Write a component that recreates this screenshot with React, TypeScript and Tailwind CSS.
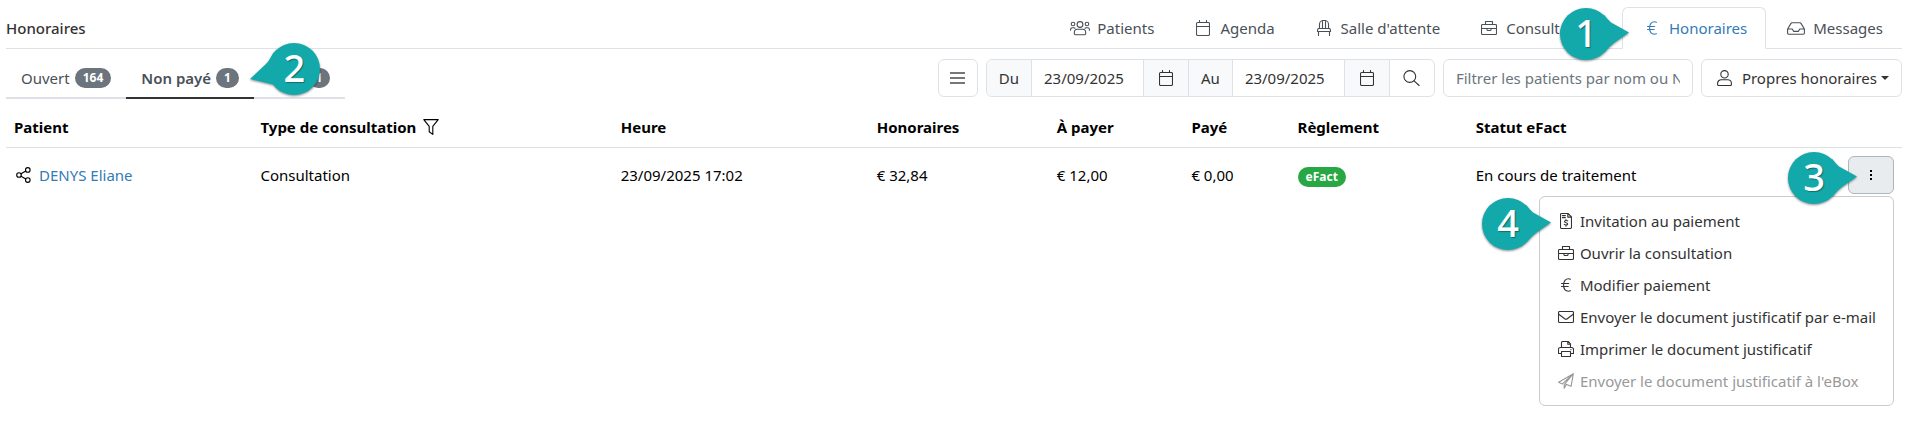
import { useState, type ReactNode } from "react"

function Icon({ w = 16, className = "", children }: { w?: number; className?: string; children: ReactNode }) {
  return (
    <svg
      width={w}
      height={16}
      viewBox={`0 0 ${w} 16`}
      fill="none"
      stroke="currentColor"
      strokeWidth={1.1}
      strokeLinecap="round"
      strokeLinejoin="round"
      className={`shrink-0 ${className}`}
      aria-hidden="true"
    >
      {children}
    </svg>
  )
}

const UsersIcon = () => (
  <Icon w={20}>
    <circle cx="10" cy="4.5" r="2.9" />
    <circle cx="3" cy="4" r="1.8" />
    <circle cx="17" cy="4" r="1.8" />
    <path d="M7.4 9.2h5.2a3.2 3.2 0 0 1 3.1 3.2v1.2a1.2 1.2 0 0 1-1.2 1.2h-9a1.2 1.2 0 0 1-1.2-1.2v-1.2a3.2 3.2 0 0 1 3.1-3.2z" />
    <path d="M.6 10.2v-.8a1.6 1.6 0 0 1 1.6-1.6h1.6l1.2.5M19.4 10.2v-.8a1.6 1.6 0 0 0-1.6-1.6h-1.6l-1.2.5" />
  </Icon>
)

const CalendarIcon = () => (
  <Icon w={14}>
    <rect x="0.5" y="2.5" width="13" height="13" rx="1.2" />
    <path d="M.5 6.5h13M3.5.5v2M10.5.5v2" />
  </Icon>
)

const ChairIcon = () => (
  <Icon w={14}>
    <path d="M2.5 8.5V4.2A3.7 3.7 0 0 1 6.2.5h1.6a3.7 3.7 0 0 1 3.7 3.7v4.3M5.5 8.500V.8M8.500 8.500V.8" />
    <path d="M1.300 8.500h11.400l.8 1.500v1.500H.5V10zM1.500 11.500v4M12.500 11.500v4" />
  </Icon>
)

const BriefcaseIcon = () => (
  <Icon w={16}>
    <rect x="0.5" y="4.5" width="15" height="10" rx="1" />
    <path d="M4.500 4.400V1.500h7v2.900M.5 8.500h5.500M10 8.500h5.500M6 8.500v1.200a.8.8 0 0 0 .8.8h2.400a.8.8 0 0 0 .8-.8V8.500z" />
  </Icon>
)

const EuroIcon = () => (
  <Icon w={10}>
    <path d="M9.400 2.200A5 5 0 0 0 7.500 1.800C4.600 1.800 2.600 4 2.600 8s2 6.200 4.900 6.200c.7 0 1.300-.1 1.900-.4M.5 6.500h7.200M.5 9.500h6.700" />
  </Icon>
)

const InboxIcon = () => (
  <Icon w={18}>
    <path d="M.6 9 4 3.400a1.200 1.200 0 0 1 1-.6h8a1.200 1.200 0 0 1 1 .6L17.400 9v4a1.200 1.200 0 0 1-1.200 1.200H1.800A1.200 1.200 0 0 1 .6 13zM.6 9h4.600l1.500 2.400h4.600L12.800 9h4.600" />
  </Icon>
)

const SearchIcon = () => (
  <Icon w={17}>
    <circle cx="6.800" cy="6.500" r="5.900" />
    <path d="m11.100 10.800 5 4.700" />
  </Icon>
)

const UserIcon = () => (
  <Icon w={15}>
    <circle cx="7.500" cy="4.300" r="3.700" />
    <path d="M4.200 9.700h6.600a3.600 3.600 0 0 1 3.600 3.600v1.200a1 1 0 0 1-1 1H1.600a1 1 0 0 1-1-1v-1.200a3.600 3.600 0 0 1 3.600-3.600z" />
  </Icon>
)

const FilterIcon = () => (
  <Icon>
    <path d="M.8.6h14.400L9.800 7.400v8L6.200 12.700V7.400z" />
  </Icon>
)

const ShareIcon = () => (
  <Icon w={15}>
    <circle cx="3" cy="8" r="2.300" />
    <circle cx="11.800" cy="2.900" r="2.300" />
    <circle cx="11.800" cy="13.100" r="2.300" />
    <path d="m5 6.800 4.800-2.700M5 9.200l4.800 2.700" />
  </Icon>
)

const InvoiceIcon = () => (
  <Icon w={12}>
    <path d="M1.500.5H8l3.500 3.400v10.400a1.200 1.200 0 0 1-1.200 1.200H1.700a1.200 1.200 0 0 1-1.200-1.200V1.500a1 1 0 0 1 1-1zM7.800.8v3.300h3.400M2.400 2.600h3M2.400 4.600h3" />
    <path d="M7.700 7.900c-.5-.5-3.200-.8-3.200.7 0 1.400 3.200.8 3.200 2.300 0 1.400-2.800 1.200-3.400.5M6 6.500v1M6 12.200v1" />
  </Icon>
)

const MailIcon = () => (
  <Icon>
    <rect x="0.500" y="2.500" width="15" height="11" rx="1" />
    <path d="m.8 5.300 5.900 4.500a2.200 2.200 0 0 0 2.600 0l5.900-4.500" />
  </Icon>
)

const PrinterIcon = () => (
  <Icon>
    <path d="M3.500 6.500v-5a1 1 0 0 1 1-1h5.700l2.300 2.300v3.700M9.800.8v2.400h2.500" />
    <path d="M3.200 12.500H.5V8.300a1.800 1.800 0 0 1 1.800-1.800h11.400a1.800 1.800 0 0 1 1.800 1.800v4.200h-2.700" />
    <path d="M3.500 10.500h9v5h-9zM12.800 8.600h.2" />
  </Icon>
)

const PlaneIcon = () => (
  <Icon>
    <path d="M15.300.7.600 9.200l3.800 1.700L15.300.7zM15.300.7l-2.200 12.600-5.700-2.300M15.300.7 6.200 11.600v3.600l2.100-3.600" />
  </Icon>
)

const ListIcon = () => (
  <svg width="15" height="13" viewBox="0 0 15 13" fill="currentColor" aria-hidden="true">
    <path d="M0 0h15v2H0zM0 5h15v2H0zM0 10h15v2H0z" />
  </svg>
)

const DotsIcon = () => (
  <svg width="4" height="12" viewBox="0 0 4 12" fill="currentColor" aria-hidden="true">
    <path d="M1 1h2v2H1zM1 5h2v2H1zM1 9h2v2H1z" />
  </svg>
)

// Numbered balloon with a tip on its left or right side
function Callout({ n, tip = "right", className }: { n: number; tip?: "left" | "right"; className: string }) {
  const right = tip === "right"
  return (
    <div className={`pointer-events-none absolute z-20 h-[54px] w-[70px] ${className}`}>
      <svg
        width="70"
        height="54"
        viewBox="0 0 70 54"
        fill="#13a9ab"
        className="overflow-visible drop-shadow-[0_1px_1px_rgba(0,0,0,0.45)]"
        aria-hidden="true"
      >
        <circle cx={right ? 26 : 44} cy="26" r="26" />
        <path
          d={
            right
              ? "M44 7Q48 12 51 14.500L69 24.500 54 35Q50 38 45 44z"
              : "M24 9Q20 17 16 21L0 36 21 41Q26 42 30 48z"
          }
        />
      </svg>
      <span
        className={`absolute top-0 w-[52px] text-center text-[38px] leading-[48px] font-medium text-white [text-shadow:1px_1px_1px_rgba(0,0,0,0.35)] ${
          right ? "left-0" : "right-0"
        }`}
      >
        {n}
      </span>
    </div>
  )
}

const navItems = [
  { label: "Patients", icon: <UsersIcon /> },
  { label: "Agenda", icon: <CalendarIcon /> },
  { label: "Salle d'attente", icon: <ChairIcon /> },
  { label: "Consultations", icon: <BriefcaseIcon /> },
  { label: "Honoraires", icon: <EuroIcon />, active: true },
  { label: "Messages", icon: <InboxIcon /> },
]

const statusTabs = [
  { label: "Ouvert", count: 164 },
  { label: "Non payé", count: 1, active: true },
  { label: "Payé", count: 1 },
]

const menuItems = [
  { label: "Invitation au paiement", icon: <InvoiceIcon /> },
  { label: "Ouvrir la consultation", icon: <BriefcaseIcon /> },
  { label: "Modifier paiement", icon: <EuroIcon /> },
  { label: "Envoyer le document justificatif par e-mail", icon: <MailIcon /> },
  { label: "Imprimer le document justificatif", icon: <PrinterIcon /> },
  { label: "Envoyer le document justificatif à l'eBox", icon: <PlaneIcon />, disabled: true },
]

function TopBar() {
  return (
    <header className="flex items-end justify-between border-b border-[#dee2e6]">
      <h1 className="py-2 font-medium text-[#333]">Honoraires</h1>
      <nav className="-mb-px flex">
        {navItems.map((item) => (
          <a
            key={item.label}
            href="#"
            className={`relative flex h-[42px] items-center gap-[7px] rounded-t-md border pr-[18px] pl-[19px] ${
              item.active
                ? "border-[#dee2e6] border-b-white bg-white text-[#337ab7]"
                : "border-transparent text-[#495057]"
            }`}
          >
            <span className="flex w-5 justify-center">{item.icon}</span>
            {item.label}
            {item.active && <Callout n={1} className="top-0 left-[-63px]" />}
          </a>
        ))}
      </nav>
    </header>
  )
}

function StatusTabs() {
  return (
    <nav className="relative flex">
      {statusTabs.map((tab) => (
        <a
          key={tab.label}
          href="#"
          className={`flex items-center gap-[5px] border-b-2 px-[15px] py-[7px] text-[#495057] ${
            tab.active ? "border-[#333] font-semibold" : "border-[#dee2e6]"
          }`}
        >
          {tab.label}
          <span className="rounded-full bg-[#6c757d] px-2 text-xs leading-5 font-bold text-white">{tab.count}</span>
        </a>
      ))}
      <Callout n={2} tip="left" className="-top-4 right-[25px]" />
    </nav>
  )
}

function DateField({ label, value, onChange }: { label: string; value: string; onChange: (v: string) => void }) {
  const id = `date-${label}`
  return (
    <>
      <label htmlFor={id} className="flex items-center border-r border-[#dee2e6] bg-[#f8f9fa] px-3">
        {label}
      </label>
      <input
        id={id}
        value={value}
        onChange={(e) => onChange(e.target.value)}
        className="w-28 border-r border-[#dee2e6] px-3 outline-none"
      />
      <button
        aria-label="Ouvrir le calendrier"
        className="flex w-[45px] items-center justify-center border-r border-[#dee2e6] bg-[#f8f9fa]"
      >
        <CalendarIcon />
      </button>
    </>
  )
}

function Toolbar() {
  const [from, setFrom] = useState("23/09/2025")
  const [to, setTo] = useState("23/09/2025")

  return (
    <div className="flex h-[38px] gap-2 text-[#333]">
      <button
        aria-label="Liste"
        className="flex w-10 items-center justify-center rounded-md border border-[#dee2e6] text-[#777]"
      >
        <ListIcon />
      </button>
      <div className="flex overflow-hidden rounded-md border border-[#dee2e6]">
        <DateField label="Du" value={from} onChange={setFrom} />
        <DateField label="Au" value={to} onChange={setTo} />
        <button aria-label="Rechercher" className="flex w-11 items-center justify-center">
          <SearchIcon />
        </button>
      </div>
      <input
        aria-label="Filtrer les patients"
        placeholder="Filtrer les patients par nom ou NISS"
        className="w-[250px] rounded-md border border-[#dee2e6] px-3 outline-none placeholder:text-[#6c757d]"
      />
      <button className="flex items-center justify-between gap-[10px] rounded-md border border-[#dee2e6] pr-3 pl-[15px]">
        <UserIcon />
        <span className="flex items-center gap-1">
          Propres honoraires
          <span className="border-x-4 border-t-4 border-x-transparent border-t-current" />
        </span>
      </button>
    </div>
  )
}

function ActionMenu() {
  const [open, setOpen] = useState(true)

  return (
    <div className="relative ml-auto w-[46px]">
      <button
        aria-label="Actions"
        onClick={() => setOpen(!open)}
        className="flex h-[38px] w-full items-center justify-center rounded-md border border-[#adb5bd] bg-[#e9ecef]"
      >
        <DotsIcon />
      </button>
      {open && (
        <ul className="absolute top-10 right-0 z-10 rounded-md border border-[#ccc] bg-white py-2 text-[#333]">
          {menuItems.map((item) => (
            <li key={item.label}>
              <button
                disabled={item.disabled}
                className="flex h-8 w-full items-center gap-1 pr-[17px] pl-4 whitespace-nowrap disabled:text-[#999]"
              >
                <span className="flex w-5 justify-center">{item.icon}</span>
                {item.label}
              </button>
            </li>
          ))}
        </ul>
      )}
      <Callout n={3} className="-top-1 right-9" />
      <Callout n={4} className="top-[42px] right-[342px]" />
    </div>
  )
}

function FeesTable() {
  return (
    <table className="w-full table-fixed text-left text-black">
      <colgroup>
        <col className="w-[13%]" />
        <col className="w-[19%]" />
        <col className="w-[13.5%]" />
        <col className="w-[9.5%]" />
        <col className="w-[7.1%]" />
        <col className="w-[5.6%]" />
        <col className="w-[9.4%]" />
        <col />
        <col className="w-16" />
      </colgroup>
      <thead>
        <tr className="border-b border-[#dee2e6] *:px-2 *:pt-4 *:pb-2 *:font-bold">
          <th>Patient</th>
          <th>
            <span className="flex items-center gap-[7px]">
              Type de consultation
              <button aria-label="Filtrer">
                <FilterIcon />
              </button>
            </span>
          </th>
          <th>Heure</th>
          <th>Honoraires</th>
          <th>À payer</th>
          <th>Payé</th>
          <th>Règlement</th>
          <th>Statut eFact</th>
          <th />
        </tr>
      </thead>
      <tbody>
        <tr className="*:px-2 *:py-2">
          <td>
            <span className="flex items-center gap-2 pl-[2px]">
              <ShareIcon />
              <a href="#" className="text-[#337ab7]">
                DENYS Eliane
              </a>
            </span>
          </td>
          <td>Consultation</td>
          <td>23/09/2025 17:02</td>
          <td>€ 32,84</td>
          <td>€ 12,00</td>
          <td>€ 0,00</td>
          <td>
            <span className="inline-block rounded-full bg-[#28a745] px-2 text-xs leading-5 font-bold text-white">
              eFact
            </span>
          </td>
          <td>En cours de traitement</td>
          <td>
            <ActionMenu />
          </td>
        </tr>
      </tbody>
    </table>
  )
}

export default function App() {
  return (
    <div className="min-h-screen bg-white pt-[7px] pr-[5px] pl-[6px] font-['Noto_Sans',sans-serif] text-[15px] leading-6">
      <TopBar />
      <div className="flex items-start justify-between pt-[10px]">
        <StatusTabs />
        <Toolbar />
      </div>
      <FeesTable />
    </div>
  )
}
